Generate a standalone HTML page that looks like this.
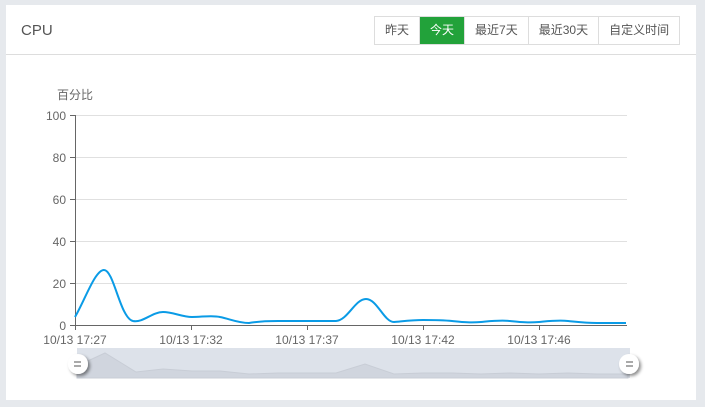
<!DOCTYPE html>
<html><head><meta charset="utf-8"><style>
body{margin:0;width:705px;height:407px;background:#e6e9ed;font-family:"Liberation Sans","Noto Sans CJK SC",sans-serif;position:relative;overflow:hidden}
.card{position:absolute;left:6px;top:5px;width:690px;height:395px;background:#fff}
.hd{position:absolute;left:0;top:0;width:690px;height:49px;border-bottom:1px solid #ddd}
.title{position:absolute;left:15px;top:17px;font-size:15px;color:#555}
.btns{position:absolute;left:368px;top:11px;display:flex;border:1px solid #ddd;height:27px}
.btns div{font-size:12px;color:#555;line-height:27px;padding:0 10px;border-left:1px solid #ddd}
.btns div:first-child{border-left:none}
.btns .on{background:#22a23a;color:#fff}
</style></head><body>
<div class="card">
<div class="hd"><div class="title">CPU</div>
<div class="btns"><div>昨天</div><div class="on">今天</div><div>最近7天</div><div>最近30天</div><div>自定义时间</div></div></div>
</div>
<svg width="705" height="407" style="position:absolute;left:0;top:0" font-family="Liberation Sans, Noto Sans CJK SC, sans-serif" font-size="12" fill="#666">
<defs><filter id="sh" x="-50%" y="-50%" width="200%" height="200%"><feDropShadow dx="2" dy="2" stdDeviation="1.5" flood-color="#000" flood-opacity="0.45"/></filter></defs>
<g stroke="#e0e0e0" stroke-width="1">
<line x1="75" y1="115.5" x2="627" y2="115.5"/><line x1="75" y1="157.5" x2="627" y2="157.5"/><line x1="75" y1="199.5" x2="627" y2="199.5"/><line x1="75" y1="241.5" x2="627" y2="241.5"/><line x1="75" y1="283.5" x2="627" y2="283.5"/>
</g>
<g stroke="#666" stroke-width="1">
<line x1="75.5" y1="115" x2="75.5" y2="325"/><line x1="75" y1="325.5" x2="627" y2="325.5"/>
<line x1="70" y1="115.5" x2="75" y2="115.5"/><line x1="70" y1="157.5" x2="75" y2="157.5"/><line x1="70" y1="199.5" x2="75" y2="199.5"/><line x1="70" y1="241.5" x2="75" y2="241.5"/><line x1="70" y1="283.5" x2="75" y2="283.5"/><line x1="70" y1="325.5" x2="75" y2="325.5"/>
<line x1="75.5" y1="325" x2="75.5" y2="330"/><line x1="191.5" y1="325" x2="191.5" y2="330"/><line x1="307.5" y1="325" x2="307.5" y2="330"/><line x1="423.5" y1="325" x2="423.5" y2="330"/><line x1="539.5" y1="325" x2="539.5" y2="330"/>
</g>
<text x="57" y="99">百分比</text>
<g text-anchor="end"><text x="66" y="120">100</text><text x="66" y="162">80</text><text x="66" y="204">60</text><text x="66" y="246">40</text><text x="66" y="288">20</text><text x="66" y="330">0</text></g>
<g text-anchor="middle"><text x="75" y="344">10/13 17:27</text><text x="191" y="344">10/13 17:32</text><text x="307" y="344">10/13 17:37</text><text x="423" y="344">10/13 17:42</text><text x="539" y="344">10/13 17:46</text></g>
<rect x="77" y="348" width="553" height="30" fill="#dde2ea"/>
<polygon points="77,378 77,366 105,353 136,372 163,369 192,371 220,371 249,374 278,373 307,373 336,373 365,364 394,374 423,373 452,373 481,374 510,373 539,374 568,373 597,374 628,374 628,378" fill="#d0d5de" stroke="#c8cdd6"/>
<path d="M75,317 C85,300 95,270 104,270 C114,270 120,318 133,321 C143,323 152,312 163,312 C173,312 182,317 192,317 C202,317 212,315 220,317 C230,319 238,323 249,323 C260,321 270,321 278,321 L336,321 C348,320 355,299 366,299 C377,299 384,322 394,322 C405,321 412,320 423,320 C435,320 442,320 452,321 C462,322 470,323 481,322 C492,321 500,320 510,321 C520,322 528,323 539,322 C550,321 558,320 568,321 C578,322 585,323 597,323 L626,323" fill="none" stroke="#0a9be6" stroke-width="2"/>
<g><circle cx="78" cy="364" r="10" fill="#fff" filter="url(#sh)"/><line x1="74" y1="362" x2="81" y2="362" stroke="#555"/><line x1="74" y1="366" x2="81" y2="366" stroke="#555"/>
<circle cx="629" cy="364" r="10" fill="#fff" filter="url(#sh)"/><line x1="626" y1="362" x2="633" y2="362" stroke="#555"/><line x1="626" y1="366" x2="633" y2="366" stroke="#555"/></g>
</svg>
</body></html>
